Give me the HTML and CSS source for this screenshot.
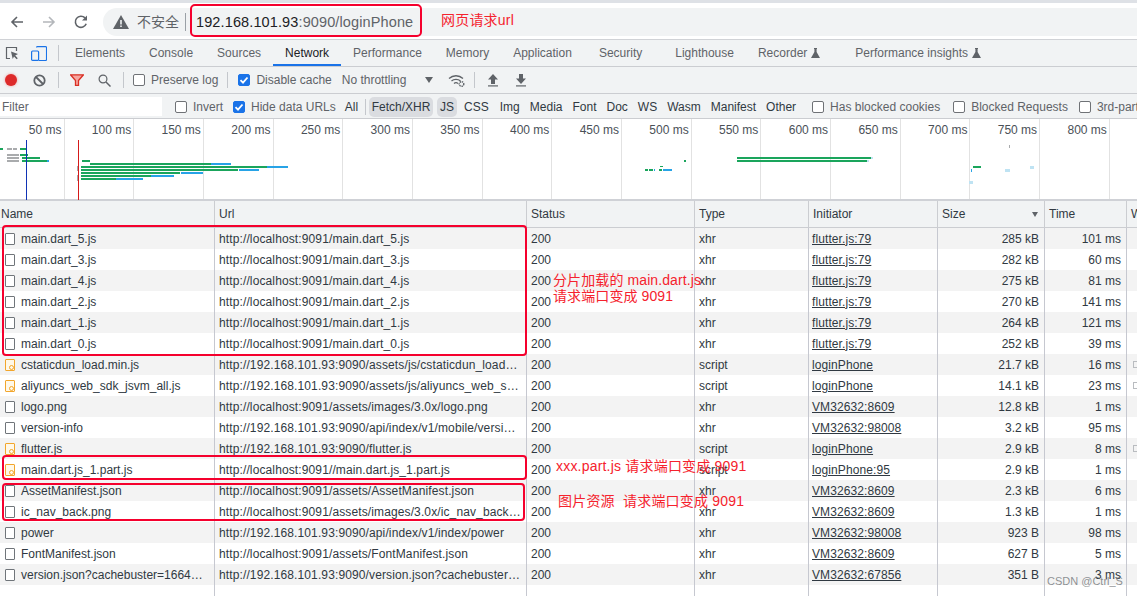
FILE: index.html
```html
<!DOCTYPE html>
<html lang="zh">
<head>
<meta charset="utf-8">
<title>Network</title>
<link rel="stylesheet" href="styles.css">
</head>
<body>
<div class="page">
  <div class="topstrip"></div>
  <header class="browserbar">
    <svg class="nav-icon" viewBox="0 0 16 16"><path d="M14 8H3M8 3 3 8l5 5" fill="none" stroke="#5f6368" stroke-width="1.6"/></svg>
    <svg class="nav-icon fwd" viewBox="0 0 16 16"><path d="M2 8h11M8 3l5 5-5 5" fill="none" stroke="#b4b7bb" stroke-width="1.6"/></svg>
    <svg class="nav-icon reload" viewBox="0 0 16 16"><path d="M13.2 9.8A5.6 5.6 0 1 1 12 3.9" fill="none" stroke="#5f6368" stroke-width="1.6"/><path d="M14 1.5v5h-5z" fill="#5f6368"/></svg>
    <div class="omnibox">
      <svg class="warn" viewBox="0 0 16 14"><path d="M8 0 16 14H0z" fill="#5f6368"/><path d="M7.2 5h1.6v4.5H7.2zM7.2 10.5h1.6V12H7.2z" fill="#f1f3f4"/></svg>
      <span class="insecure">不安全</span>
      <span class="omni-sep"></span>
      <span class="url"><b>192.168.101.93</b>:9090/loginPhone</span>
    </div>
  </header>

  <nav class="tabs">
    <svg class="ico-inspect" viewBox="0 0 14 14"><path d="M5 12.5H1.5V1.5h10V5" fill="none" stroke="#5f6368" stroke-width="1.2"/><path d="M6 5.5l7 2.6-2.8 1.3 2.6 2.8-1.2 1.1-2.6-2.8-1.3 2.6z" fill="#5f6368"/></svg>
    <svg class="ico-device" viewBox="0 0 16 15"><path d="M5.5 1.5A1 1 0 0 1 6.500.6h8a1 1 0 0 1 1 1v12a1 1 0 0 1-1 1H8" fill="none" stroke="#1a73e8" stroke-width="1.100"/><rect x=".6" y="5" width="7" height="9.400" rx="1" fill="none" stroke="#1a73e8" stroke-width="1.200"/></svg>
    <span class="vsep tabsep"></span>
    <a class="tab">Elements</a>
    <a class="tab">Console</a>
    <a class="tab">Sources</a>
    <a class="tab active">Network</a>
    <a class="tab">Performance</a>
    <a class="tab">Memory</a>
    <a class="tab">Application</a>
    <a class="tab tab-sec">Security</a>
    <a class="tab tab-light">Lighthouse</a>
    <a class="tab">Recorder <svg class="flask" viewBox="0 0 9 10"><path d="M3 0h3v1h-.4v3L9 10H0l3.400-6V1H3z" fill="#5f6368"/></svg></a>
    <a class="tab tab-perf">Performance insights <svg class="flask" viewBox="0 0 9 10"><path d="M3 0h3v1h-.4v3L9 10H0l3.400-6V1H3z" fill="#5f6368"/></svg></a>
  </nav>

  <div class="toolbar">
    <span class="record"></span>
    <svg class="ico-clear" viewBox="0 0 13 13"><circle cx="6.500" cy="6.500" r="5.200" fill="none" stroke="#5f6368" stroke-width="1.800"/><path d="M3 3l7 7" stroke="#5f6368" stroke-width="1.800"/></svg>
    <span class="vsep sep-a"></span>
    <svg class="ico-funnel" viewBox="0 0 14 12"><path d="M.5.800h13L8.500 6.500V11.500h-3V6.500z" fill="#f6a6a0" stroke="#d93025" stroke-width="1.300"/></svg>
    <svg class="ico-search" viewBox="0 0 13 13"><circle cx="5" cy="5" r="3.900" fill="none" stroke="#5f6368" stroke-width="1.200"/><path d="M8 8l4.500 4.500" stroke="#5f6368" stroke-width="1.500"/></svg>
    <span class="vsep sep-b"></span>
    <label class="check check-pl"><span class="box"></span>Preserve log</label>
    <span class="vsep sep-c"></span>
    <label class="check check-dc"><span class="box on"><svg viewBox="0 0 12 12"><path d="M2.500 6.200 5 8.700 9.500 3.500" fill="none" stroke="#fff" stroke-width="1.800"/></svg></span>Disable cache</label>
    <span class="throttle">No throttling</span>
    <span class="caret"></span>
    <svg class="ico-wifi" viewBox="0 0 17 13"><path d="M1 4.500C5 .8 11 .8 15 4.500M3.500 7C6 4.800 10 4.800 12.500 7M6 9.500c1.200-1 2.800-1 4 0" fill="none" stroke="#5f6368" stroke-width="1.300"/><circle cx="13.500" cy="10" r="2.300" fill="none" stroke="#5f6368" stroke-width="1.400" stroke-dasharray="1.300 .7"/></svg>
    <span class="vsep sep-d"></span>
    <svg class="ico-arrow" viewBox="0 0 10 13"><path d="M5 0l5 5.500H7V10H3V5.500H0z" fill="#5f6368"/><path d="M0 11.900h10" stroke="#5f6368" stroke-width="1.200"/></svg>
    <svg class="ico-arrow down" viewBox="0 0 10 13"><path d="M5 10 0 4.500h3V0h4v4.500h3z" fill="#5f6368"/><path d="M0 11.900h10" stroke="#5f6368" stroke-width="1.200"/></svg>
  </div>

  <div class="filterbar">
    <div class="filter-input">Filter</div>
    <label class="check check-inv"><span class="box"></span>Invert</label>
    <label class="check check-hide"><span class="box on"><svg viewBox="0 0 12 12"><path d="M2.500 6.200 5 8.700 9.500 3.500" fill="none" stroke="#fff" stroke-width="1.800"/></svg></span>Hide data URLs</label>
    <span class="ftype ftype-all">All</span>
    <span class="vsep sep-e"></span>
    <span class="ftype chip chip-xhr">Fetch/XHR</span>
    <span class="ftype chip chip-js">JS</span>
    <span class="ftype">CSS</span>
    <span class="ftype ftype-img">Img</span>
    <span class="ftype">Media</span>
    <span class="ftype">Font</span>
    <span class="ftype">Doc</span>
    <span class="ftype">WS</span>
    <span class="ftype">Wasm</span>
    <span class="ftype">Manifest</span>
    <span class="ftype">Other</span>
    <label class="check check-hbc"><span class="box"></span>Has blocked cookies</label>
    <label class="check check-br"><span class="box"></span>Blocked Requests</label>
    <label class="check check-3p"><span class="box"></span>3rd-party requests</label>
  </div>

  <section class="overview">
    <div class="tick first">50 ms</div>
    <div class="tick">100 ms</div>
    <div class="tick">150 ms</div>
    <div class="tick">200 ms</div>
    <div class="tick">250 ms</div>
    <div class="tick">300 ms</div>
    <div class="tick">350 ms</div>
    <div class="tick">400 ms</div>
    <div class="tick">450 ms</div>
    <div class="tick">500 ms</div>
    <div class="tick">550 ms</div>
    <div class="tick">600 ms</div>
    <div class="tick">650 ms</div>
    <div class="tick">700 ms</div>
    <div class="tick">750 ms</div>
    <div class="tick">800 ms</div>
    <svg class="bars" viewBox="0 0 1137 81" width="1137" height="81">
      <g class="b-gray">
        <rect x="7" y="29" width="5" height="2"/><rect x="13" y="29" width="4" height="2"/><rect x="7" y="35" width="12" height="2"/><rect x="7" y="38" width="12" height="2"/><rect x="7" y="41" width="12" height="2"/><rect x="1009" y="26" width="1" height="3"/>
        <rect x="77" y="47" width="2" height="5"/><rect x="77" y="56" width="2" height="6"/>
      </g>
      <g class="b-green">
        <rect x="0" y="29" width="3" height="2"/><rect x="20" y="29" width="6" height="2"/><rect x="20" y="35" width="8" height="2"/><rect x="22" y="38" width="18" height="2"/><rect x="22" y="41" width="25" height="2"/>
        <rect x="82" y="41" width="8" height="2"/><rect x="90" y="44" width="121" height="2"/><rect x="81" y="47" width="186" height="2"/><rect x="81" y="50" width="157" height="2"/><rect x="81" y="53" width="99" height="2"/><rect x="81" y="56" width="70" height="2"/><rect x="81" y="59" width="35" height="2"/>
        <rect x="737" y="38" width="134" height="2"/><rect x="737" y="41" width="130" height="2"/>
        <rect x="645" y="50" width="3" height="2"/><rect x="649" y="50" width="4" height="2"/><rect x="659" y="50" width="3" height="2"/><rect x="660" y="47" width="3" height="1"/><rect x="684" y="41" width="2" height="2"/><rect x="973" y="47" width="8" height="2"/>
      </g>
      <g class="b-blue">
        <rect x="47" y="41" width="2" height="2"/><rect x="211" y="44" width="20" height="2"/><rect x="267" y="47" width="21" height="2"/><rect x="239" y="50" width="20" height="2"/><rect x="181" y="53" width="22" height="2"/><rect x="151" y="56" width="23" height="2"/><rect x="116" y="59" width="27" height="2"/>
        <rect x="663" y="50" width="9" height="2"/><rect x="654" y="50" width="1" height="2"/><rect x="971" y="50" width="1" height="3"/>
      </g>
      <g class="b-pale">
        <rect x="871" y="38" width="2" height="2"/><rect x="867" y="41" width="2" height="2"/><rect x="1005" y="50" width="5" height="3"/><rect x="1030" y="47" width="4" height="3"/><rect x="969" y="62" width="4" height="3"/>
      </g>
      <rect class="l-blue" x="26" y="21" width="1" height="60"/>
      <rect class="l-red" x="78" y="21" width="1" height="60"/>
    </svg>
  </section>

  <section class="netlog">
    <table class="grid">
      <colgroup><col class="c1"><col class="c2"><col class="c3"><col class="c4"><col class="c5"><col class="c6"><col class="c7"><col class="c8"></colgroup>
      <thead>
        <tr><th>Name</th><th>Url</th><th>Status</th><th>Type</th><th>Initiator</th><th><div class="sorted">Size<span class="sort"></span></div></th><th>Time</th><th class="wf">W</th></tr>
      </thead>
      <tbody>
        <tr><td class="n"><span class="fi"></span>main.dart_5.js</td><td class="u">http://localhost:9091/main.dart_5.js</td><td>200</td><td>xhr</td><td class="i">flutter.js:79</td><td class="r">285 kB</td><td class="r">101 ms</td><td></td></tr>
        <tr><td class="n"><span class="fi"></span>main.dart_3.js</td><td class="u">http://localhost:9091/main.dart_3.js</td><td>200</td><td>xhr</td><td class="i">flutter.js:79</td><td class="r">282 kB</td><td class="r">60 ms</td><td></td></tr>
        <tr><td class="n"><span class="fi"></span>main.dart_4.js</td><td class="u">http://localhost:9091/main.dart_4.js</td><td>200</td><td>xhr</td><td class="i">flutter.js:79</td><td class="r">275 kB</td><td class="r">81 ms</td><td></td></tr>
        <tr><td class="n"><span class="fi"></span>main.dart_2.js</td><td class="u">http://localhost:9091/main.dart_2.js</td><td>200</td><td>xhr</td><td class="i">flutter.js:79</td><td class="r">270 kB</td><td class="r">141 ms</td><td></td></tr>
        <tr><td class="n"><span class="fi"></span>main.dart_1.js</td><td class="u">http://localhost:9091/main.dart_1.js</td><td>200</td><td>xhr</td><td class="i">flutter.js:79</td><td class="r">264 kB</td><td class="r">121 ms</td><td></td></tr>
        <tr><td class="n"><span class="fi"></span>main.dart_0.js</td><td class="u">http://localhost:9091/main.dart_0.js</td><td>200</td><td>xhr</td><td class="i">flutter.js:79</td><td class="r">252 kB</td><td class="r">39 ms</td><td></td></tr>
        <tr><td class="n"><span class="fi js"></span>cstaticdun_load.min.js</td><td class="u">http://192.168.101.93:9090/assets/js/cstaticdun_load…</td><td>200</td><td>script</td><td class="i">loginPhone</td><td class="r">21.7 kB</td><td class="r">16 ms</td><td><span class="wfm"></span></td></tr>
        <tr><td class="n"><span class="fi js"></span>aliyuncs_web_sdk_jsvm_all.js</td><td class="u">http://192.168.101.93:9090/assets/js/aliyuncs_web_s…</td><td>200</td><td>script</td><td class="i">loginPhone</td><td class="r">14.1 kB</td><td class="r">23 ms</td><td><span class="wfm"></span></td></tr>
        <tr><td class="n"><span class="fi"></span>logo.png</td><td class="u">http://localhost:9091/assets/images/3.0x/logo.png</td><td>200</td><td>xhr</td><td class="i">VM32632:8609</td><td class="r">12.8 kB</td><td class="r">1 ms</td><td></td></tr>
        <tr><td class="n"><span class="fi"></span>version-info</td><td class="u">http://192.168.101.93:9090/api/index/v1/mobile/versi…</td><td>200</td><td>xhr</td><td class="i">VM32632:98008</td><td class="r">3.2 kB</td><td class="r">95 ms</td><td></td></tr>
        <tr><td class="n"><span class="fi js"></span>flutter.js</td><td class="u">http://192.168.101.93:9090/flutter.js</td><td>200</td><td>script</td><td class="i">loginPhone</td><td class="r">2.9 kB</td><td class="r">8 ms</td><td><span class="wfm"></span></td></tr>
        <tr><td class="n"><span class="fi js"></span>main.dart.js_1.part.js</td><td class="u">http://localhost:9091//main.dart.js_1.part.js</td><td>200</td><td>script</td><td class="i">loginPhone:95</td><td class="r">2.9 kB</td><td class="r">1 ms</td><td></td></tr>
        <tr><td class="n"><span class="fi"></span>AssetManifest.json</td><td class="u">http://localhost:9091/assets/AssetManifest.json</td><td>200</td><td>xhr</td><td class="i">VM32632:8609</td><td class="r">2.3 kB</td><td class="r">6 ms</td><td></td></tr>
        <tr><td class="n"><span class="fi"></span>ic_nav_back.png</td><td class="u">http://localhost:9091/assets/images/3.0x/ic_nav_back…</td><td>200</td><td>xhr</td><td class="i">VM32632:8609</td><td class="r">1.3 kB</td><td class="r">1 ms</td><td></td></tr>
        <tr><td class="n"><span class="fi"></span>power</td><td class="u">http://192.168.101.93:9090/api/index/v1/index/power</td><td>200</td><td>xhr</td><td class="i">VM32632:98008</td><td class="r">923 B</td><td class="r">98 ms</td><td></td></tr>
        <tr><td class="n"><span class="fi"></span>FontManifest.json</td><td class="u">http://localhost:9091/assets/FontManifest.json</td><td>200</td><td>xhr</td><td class="i">VM32632:8609</td><td class="r">627 B</td><td class="r">5 ms</td><td></td></tr>
        <tr><td class="n"><span class="fi"></span>version.json?cachebuster=1664…</td><td class="u">http://192.168.101.93:9090/version.json?cachebuster…</td><td>200</td><td>xhr</td><td class="i">VM32632:67856</td><td class="r">351 B</td><td class="r">3 ms</td><td></td></tr>
        <tr class="filler"><td></td><td></td><td></td><td></td><td></td><td></td><td></td><td></td></tr>
      </tbody>
    </table>
  </section>

  <div class="mark box-url"></div>
  <div class="note note-url">网页请求url</div>
  <div class="mark box-main"></div>
  <div class="note note-main">分片加载的 main.dart.js<br>请求端口变成 9091</div>
  <div class="mark box-part"></div>
  <div class="note note-part">xxx.part.js 请求端口变成 9091</div>
  <div class="mark box-img"></div>
  <div class="note note-img">图片资源&nbsp;&nbsp;请求端口变成 9091</div>
  <div class="watermark">CSDN @Ctrl_S</div>
</div>
</body>
</html>
```
FILE: styles.css
```css
* { box-sizing: border-box; }
html, body { margin: 0; padding: 0; }
body { background: #fff; color: #303942; font: 12px/14px "Liberation Sans", "Noto Sans CJK SC", sans-serif; }
.page { position: relative; width: 1137px; height: 596px; overflow: hidden; }

.topstrip { height: 3px; background: #dee1e6; }
.browserbar { height: 37px; background: #fff; border-bottom: 1px solid #d0d2d6; padding: 4px 0 3px 9px; display: flex; align-items: center; }
.nav-icon { width: 16px; height: 16px; flex: none; }
.nav-icon.fwd { margin-left: 16px; }
.nav-icon.reload { margin-left: 16px; }
.omnibox { flex: 1; height: 28px; margin-left: 14px; background: #f1f3f4; border-radius: 14px 0 0 14px; display: flex; align-items: center; padding-left: 10px; }
.warn { width: 16px; height: 14px; flex: none; }
.insecure { margin-left: 8px; font-size: 14px; color: #5f6368; }
.omni-sep { width: 1px; height: 18px; background: #9aa0a6; margin: 0 10px 0 6px; }
.url { font-size: 14.5px; color: #5f6368; letter-spacing: .12px; }
.url b { font-weight: 400; color: #202124; }

.tabs { height: 27px; background: #f1f3f4; border-bottom: 1px solid #cbcdd1; display: flex; align-items: stretch; padding-left: 5px; color: #5f6368; }
.tabs > svg { align-self: center; flex: none; }
.ico-inspect { width: 14px; height: 14px; }
.ico-device { width: 16px; height: 15px; margin-left: 12px; }
.vsep { width: 1px; height: 16px; background: #c4c7cc; flex: none; align-self: center; }
.tabsep { margin: 0 4px 0 11px; }
.tab { padding: 0 12px; display: flex; align-items: center; gap: 4px; white-space: nowrap; }
.tab.active { color: #202124; box-shadow: inset 0 -2px 0 #1a73e8; }
.tab-sec { margin-left: 3px; }
.tab-light { margin-left: 9px; }
.tab-perf { margin-left: 11px; }
.flask { width: 9px; height: 10px; }

.toolbar { height: 27px; background: #f1f3f4; border-bottom: 1px solid #cbcdd1; display: flex; align-items: center; padding-left: 5px; color: #5f6368; }
.record { width: 12px; height: 12px; border-radius: 50%; background: #dd2a2a; box-shadow: 0 0 3px #ef9a9a; flex: none; }
.ico-clear { width: 13px; height: 13px; margin-left: 16px; flex: none; }
.sep-a { margin-left: 12px; }
.ico-funnel { width: 14px; height: 12px; margin-left: 11px; flex: none; }
.ico-search { width: 13px; height: 13px; margin-left: 14px; flex: none; }
.sep-b { margin-left: 12px; }
.check { display: flex; align-items: center; gap: 6px; white-space: nowrap; flex: none; }
.box { width: 12px; height: 12px; border: 1px solid #6f7276; border-radius: 2px; background: #fff; flex: none; display: block; }
.box.on { background: #1a73e8; border-color: #1a73e8; }
.box svg { display: block; width: 12px; height: 12px; margin: -1px; }
.check-pl { margin-left: 9px; }
.sep-c { margin-left: 9px; }
.check-dc { margin-left: 10px; }
.throttle { margin-left: 10px; white-space: nowrap; }
.caret { width: 0; height: 0; border-left: 4px solid transparent; border-right: 4px solid transparent; border-top: 6px solid #5f6368; margin-left: 19px; flex: none; }
.ico-wifi { width: 17px; height: 13px; margin-left: 15px; flex: none; }
.sep-d { margin-left: 9px; }
.ico-arrow { width: 10px; height: 13px; margin-left: 13px; flex: none; }
.ico-arrow.down { margin-left: 18px; }

.filterbar { height: 25px; padding-top: 1px; background: #f1f3f4; border-bottom: 1px solid #cbcdd1; display: flex; align-items: center; color: #303942; white-space: nowrap; overflow: hidden; }
.filter-input { width: 162px; height: 19px; background: #fff; padding: 3px 2px; color: #5f6368; flex: none; }
.check-inv { margin-left: 13px; color: #5f6368; }
.check-hide { margin-left: 10px; color: #5f6368; }
.ftype { margin-left: 10px; flex: none; }
.ftype-all { margin-left: 9px; }
.ftype-img { margin-left: 11px; }
.sep-e { margin-left: 7px; margin-right: -7px; }
.chip { height: 20px; line-height: 20px; background: #dadce0; border-radius: 5px; text-align: center; color: #303942; }
.chip-xhr { width: 64px; }
.chip-js { width: 20px; margin-left: 4px; }
.chip + .ftype:not(.chip) { margin-left: 7px; }
.check-hbc { margin-left: 16px; color: #5f6368; }
.check-br { margin-left: 13px; color: #5f6368; }
.check-3p { margin-left: 11px; color: #5f6368; }

.overview { position: relative; height: 82px; background: #fff; border-bottom: 2px solid #cfd1d6; display: flex; }
.tick { width: 69.7px; flex: none; border-right: 1px solid #e2e2e2; text-align: right; padding: 4px 2px 0 0; color: #4a5057; white-space: nowrap; }
.tick.first { width: 64.500px; }
.bars { position: absolute; left: 0; top: 0; }
.b-gray { fill: #a9abad; }
.b-green { fill: #1aa55c; }
.b-blue { fill: #27a3e6; }
.b-pale { fill: #bfe3f3; }
.l-blue { fill: #1033b5; }
.l-red { fill: #d51a1a; }

.netlog { height: 396px; overflow: hidden; }
.grid { table-layout: fixed; width: 1137px; border-collapse: separate; border-spacing: 0; }
.c1 { width: 215px; } .c2 { width: 312px; } .c3 { width: 168px; } .c4 { width: 114px; }
.c5 { width: 129px; } .c6 { width: 107px; } .c7 { width: 82px; } .c8 { width: 10px; }
.grid th { height: 27px; background: #f1f3f4; border-bottom: 1px solid #cbcdd1; border-right: 1px solid #cbcdd1; font-weight: 400; text-align: left; padding: 0 4px; color: #303942; white-space: nowrap; }
.grid th:first-child { padding-left: 1px; }
.grid th.wf { border-right: 0; overflow: hidden; }
.sorted { display: flex; align-items: center; justify-content: space-between; padding-right: 2px; }
.sort { width: 0; height: 0; border-left: 3.500px solid transparent; border-right: 3.500px solid transparent; border-top: 5px solid #5f6368; }
.grid td { height: 21px; padding: 0 4px; border-right: 1px solid #c6c8d0; white-space: nowrap; overflow: hidden; text-overflow: ellipsis; color: #303942; background: #fff; }
.grid td:last-child { border-right: 0; padding: 0 0 0 6px; }
.grid tbody tr:nth-child(odd) td { background: #f3f3f3; }
.grid tbody tr.filler td { height: 30px; background: #fff; }
.grid td.n { padding-left: 5px; overflow: visible; }
.grid td.u { letter-spacing: .12px; padding-right: 0; }
.grid td.i { text-decoration: underline; padding-left: 3px; letter-spacing: .1px; }
.grid td.r { text-align: right; padding-right: 5px; }
.fi { display: inline-block; width: 10px; height: 12px; border: 1px solid #70757a; border-radius: 1px; margin-right: 6px; vertical-align: -2px; background: #fff; position: relative; }
.fi.js { border-color: #f2a62c; background: #fff8e8; }
.fi.js::after { content: ""; position: absolute; left: 2.500px; top: 5px; width: 3px; height: 3px; border: 1px solid #f2a62c; border-radius: 50%; }
.wfm { display: block; width: 5px; height: 7px; border: 1px solid #b9bcc0; }

.mark { position: absolute; border: 2px solid #f5002d; border-radius: 4px; }
.box-url { left: 190px; top: 4px; width: 232px; height: 33px; border-radius: 5px; }
.box-main { left: 2px; top: 225px; width: 525px; height: 131px; }
.box-part { left: 2px; top: 455px; width: 525px; height: 25px; }
.box-img { left: 2px; top: 483px; width: 523px; height: 38px; }
.note { position: absolute; color: #f5222d; font-size: 14px; letter-spacing: .2px; line-height: 16px; white-space: nowrap; }
.note-url { left: 441px; top: 12px; }
.note-main { left: 553px; top: 272px; letter-spacing: .1px; }
.note-part { left: 556px; top: 458px; }
.note-img { left: 558px; top: 493px; }
.watermark { position: absolute; left: 1047px; top: 574px; font-size: 11px; color: rgba(95, 99, 104, .7); white-space: nowrap; }
```
